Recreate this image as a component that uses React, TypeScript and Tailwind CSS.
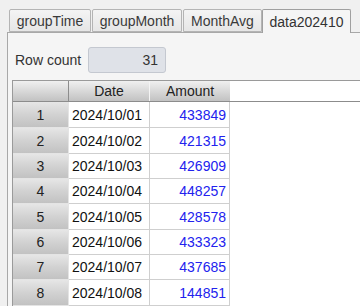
const tabs = [
  { label: 'groupTime', w: 'w-[82px]', mr: 'mr-[1px]' },
  { label: 'groupMonth', w: 'w-[90px]', mr: 'mr-[1px]' },
  { label: 'MonthAvg', w: 'w-[79px]', mr: 'mr-0' },
];

const rows = [
  { n: 1, date: '2024/10/01', amount: 433849, h: 'h-[26px]' },
  { n: 2, date: '2024/10/02', amount: 421315, h: 'h-[26px]' },
  { n: 3, date: '2024/10/03', amount: 426909, h: 'h-[25px]' },
  { n: 4, date: '2024/10/04', amount: 448257, h: 'h-[25px]' },
  { n: 5, date: '2024/10/05', amount: 428578, h: 'h-[26px]' },
  { n: 6, date: '2024/10/06', amount: 433323, h: 'h-[25px]' },
  { n: 7, date: '2024/10/07', amount: 437685, h: 'h-[25px]' },
  { n: 8, date: '2024/10/08', amount: 144851, h: 'h-[26px]' },
];

export default function App() {
  return (
    <div className="w-[360px] h-[306px] overflow-hidden bg-[#f0f0f0] flex flex-col text-[14px] leading-none text-[#333] font-['Liberation_Sans',Arial,sans-serif]">
      {/* Tabs */}
      <div className="flex items-end pl-[9px] pt-[9px]">
        {tabs.map((t) => (
          <div
            key={t.label}
            className={`${t.w} ${t.mr} h-[23px] flex items-center justify-center border border-[#b4b4b4] rounded-t-[2px] bg-linear-to-b from-[#f4f4f4] to-[#e6e6e6] text-[#3a3a3a]`}
          >
            {t.label}
          </div>
        ))}
        <div className="relative z-10 w-[89px] h-[24px] -mb-px flex items-center justify-center border border-b-0 border-[#a0a0a0] rounded-t-[2px] bg-[#f5f5f5] text-[#333]">
          data202410
        </div>
      </div>

      {/* Panel */}
      <div className="ml-[7px] flex-1 flex flex-col border-l border-t border-[#a8a8a8] bg-[#f5f5f5]">
        <div className="flex items-center mt-[14px] pl-[7px]">
          <span className="w-[73px]">Row count</span>
          <div className="w-[78px] h-[26px] flex items-center justify-end pr-[7px] rounded-[3px] border border-[#c4c8d0] bg-[#dfe2e8] text-[#333]">
            31
          </div>
        </div>

        {/* Table */}
        <div className="mt-[7px] ml-[4px] flex-1 border-t border-l border-[#9a9a9a] bg-white">
          <div className="flex h-[21px] border-b border-[#8c8c8c]">
            <div className="w-[56px] border-r border-[#8c8c8c] bg-linear-to-b from-[#f0f0f0] to-[#c2c2c2]" />
            <div className="w-[81px] flex items-center justify-center border-r border-[#f4f4f4] bg-linear-to-b from-[#f0f0f0] to-[#c2c2c2] text-[#222]">
              Date
            </div>
            <div className="w-[80px] flex items-center justify-center bg-linear-to-b from-[#f0f0f0] to-[#c2c2c2] text-[#222]">
              Amount
            </div>
          </div>
          {rows.map((r) => (
            <div key={r.n} className={`flex ${r.h}`}>
              <div className="w-[56px] flex items-center justify-center border-r border-b border-[#e4e4e4] bg-linear-to-b from-[#e6e6e6] via-[#d2d2d2] to-[#c2c2c2] text-[#222]">
                {r.n}
              </div>
              <div className="w-[81px] flex items-center pl-[3px] border-r border-b border-[#cfcfcf] text-[#111]">
                {r.date}
              </div>
              <div className="w-[80px] flex items-center justify-end pr-[3px] border-r border-b border-[#cfcfcf] text-[#2222ee]">
                {r.amount}
              </div>
            </div>
          ))}
          {/* next row, only its top edge shows */}
          <div className="flex h-[26px]">
            <div className="w-[56px] border-r border-[#e4e4e4] bg-linear-to-b from-[#e6e6e6] via-[#d2d2d2] to-[#c2c2c2]" />
            <div className="w-[81px] border-r border-[#cfcfcf]" />
            <div className="w-[80px] border-r border-[#cfcfcf]" />
          </div>
        </div>
      </div>
    </div>
  );
}
